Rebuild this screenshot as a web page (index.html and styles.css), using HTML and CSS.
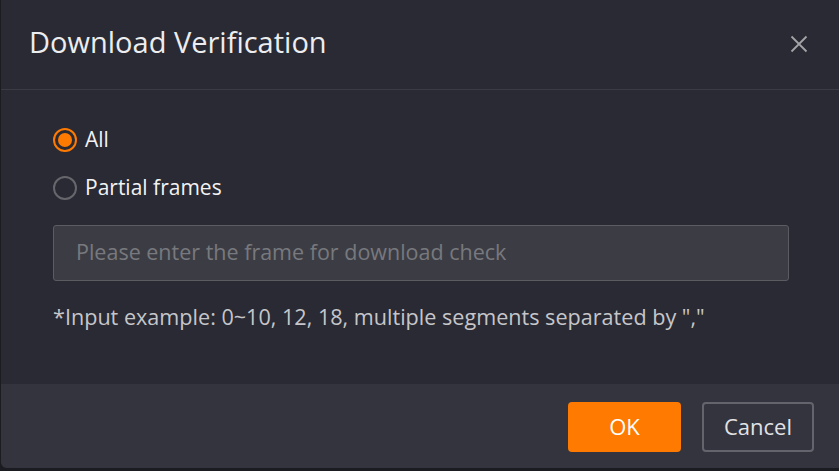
FILE: index.html
```html
<!DOCTYPE html>
<html lang="en">
<head>
<meta charset="utf-8">
<title>Download Verification</title>
<link rel="stylesheet" href="styles.css">
</head>
<body>
<div class="dialog">
  <div class="header">
    <h1 class="title">Download Verification</h1>
    <button class="close" aria-label="Close">
      <svg width="18" height="18" viewBox="0 0 18 18"><path d="M1.5 1.5 L16.5 16.5 M16.5 1.5 L1.5 16.5" stroke="#a3a3a8" stroke-width="1.8" fill="none"/></svg>
    </button>
  </div>
  <div class="body">
    <label class="radio-row">
      <span class="radio checked"><span class="dot"></span></span>
      <span class="radio-label">All</span>
    </label>
    <label class="radio-row">
      <span class="radio"></span>
      <span class="radio-label">Partial frames</span>
    </label>
    <div class="input">Please enter the frame for download check</div>
    <p class="hint">*Input example: 0~10, 12, 18, multiple segments separated by ","</p>
  </div>
  <div class="footer">
    <button class="btn btn-ok">OK</button>
    <button class="btn btn-cancel">Cancel</button>
  </div>
</div>
</body>
</html>
```
FILE: styles.css
```css
* { box-sizing: border-box; }
html, body { margin: 0; padding: 0; }
body {
  background: #1b1c21;
  width: 839px;
  height: 471px;
  overflow: hidden;
  font-family: "Open Sans", "Noto Sans", sans-serif;
  color: #ececee;
}
.dialog {
  margin-left: 1px;
  width: 850px;
  height: 468px;
  background: #292a33;
  border-radius: 0 0 0 6px;
  display: flex;
  flex-direction: column;
  overflow: hidden;
}
.header {
  height: 90px;
  border-bottom: 1px solid #3a3b43;
  display: flex;
  align-items: center;
  justify-content: space-between;
  padding: 0 0 0 28px;
}
.title {
  margin: 0;
  font-size: 29px;
  font-weight: 400;
  color: #ededf0;
  padding-bottom: 6px;
}
.close {
  background: none;
  border: 0;
  padding: 0;
  margin-right: 43px;
  width: 18px;
  height: 18px;
  display: flex;
  margin-bottom: 2px;
}
.body {
  flex: 1;
  padding: 26px 0 0 52px;
}
.radio-row {
  display: flex;
  align-items: center;
  height: 48px;
  gap: 8px;
}
.radio {
  width: 24px;
  height: 24px;
  border-radius: 50%;
  border: 2px solid #66666c;
  display: flex;
  align-items: center;
  justify-content: center;
}
.radio.checked { border-color: #ff7a00; }
.dot {
  width: 14px;
  height: 14px;
  border-radius: 50%;
  background: #ff7a00;
}
.radio-label {
  font-size: 21px;
  font-weight: 500;
  color: #f2f2f4;
  padding-bottom: 3px;
}
.input {
  margin-top: 13px;
  width: 736px;
  height: 56px;
  background: #3c3d44;
  border: 1px solid #5b5c62;
  border-radius: 3px;
  padding-left: 22px;
  display: flex;
  align-items: center;
  font-size: 21.5px;
  color: #78797e;
  padding-bottom: 3px;
  white-space: nowrap;
}
.hint {
  margin: 22px 0 0 0;
  font-size: 21.6px;
  line-height: 28px;
  color: #c6c6ca;
  white-space: nowrap;
}
.footer {
  height: 84px;
  background: #33343e;
  display: flex;
  align-items: flex-start;
  padding: 18px 0 0 567px;
  gap: 21px;
}
.btn {
  height: 50px;
  border-radius: 4px;
  font-family: inherit;
  font-size: 22px;
  padding: 0 0 3px 0;
  cursor: pointer;
}
.btn-ok {
  width: 113px;
  background: #ff7a00;
  border: 0;
  color: #ffffff;
}
.btn-cancel {
  width: 112px;
  background: transparent;
  border: 2px solid #64656c;
  color: #e2e2e5;
}
```
